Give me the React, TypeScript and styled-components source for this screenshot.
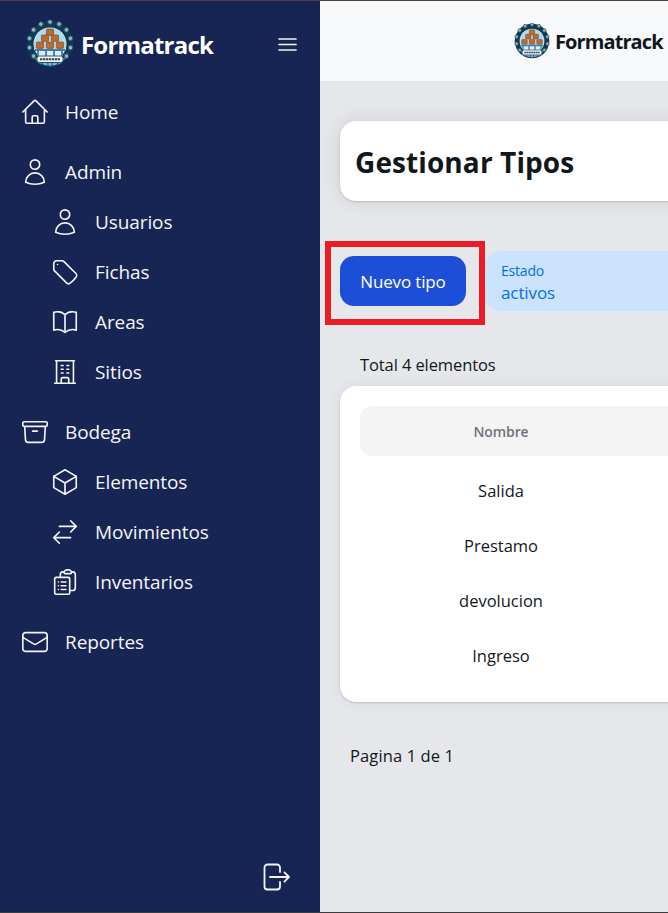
import React from "react";
import styled, { createGlobalStyle } from "styled-components";
import {
  HiOutlineHome,
  HiOutlineUser,
  HiOutlineTag,
  HiOutlineBookOpen,
  HiOutlineBuildingOffice,
  HiOutlineArchiveBox,
  HiOutlineCube,
  HiOutlineArrowsRightLeft,
  HiOutlineClipboardDocumentList,
  HiOutlineEnvelope,
  HiOutlineBars3,
} from "react-icons/hi2";

const Global = createGlobalStyle`
  html, body { margin: 0; padding: 0; height: 100%; overflow: hidden; }
  body { font-family: "Open Sans", "Noto Sans", "Liberation Sans", sans-serif; }
`;

const Frame = styled.div`
  width: 668px;
  height: 913px;
  display: flex;
  flex-direction: column;
  overflow: hidden;
`;
const EdgeLine = styled.div<{ $c: string }>`
  height: 1px;
  flex: none;
  background: ${(p) => p.$c};
`;
const Shell = styled.div`
  flex: 1;
  min-height: 0;
  display: flex;
`;
const Sidebar = styled.aside`
  width: 320px;
  flex: none;
  background: #172554;
  color: #f4f4f5;
  display: flex;
  flex-direction: column;
`;
const Brand = styled.div`
  height: 86px;
  flex: none;
  display: flex;
  align-items: center;
  padding: 0 20px 0 26px;
  box-sizing: border-box;
`;
const BrandName = styled.span`
  margin: 1px 0 0 7px;
  font-size: 24px;
  font-weight: 700;
  letter-spacing: -0.8px;
  color: #fff;
  flex: 1;
  line-height: 1;
`;
const Burger = styled.span`
  display: flex;
  color: #f4f4f5;
`;
const Nav = styled.nav`
  display: flex;
  flex-direction: column;
  gap: 10px;
`;
const Group = styled.div`
  display: flex;
  flex-direction: column;
`;
const Item = styled.a<{ $sub?: boolean }>`
  height: 50px;
  display: flex;
  align-items: center;
  gap: 15px;
  padding-left: ${(p) => (p.$sub ? 50 : 20)}px;
  font-size: 19px;
  letter-spacing: -0.1px;
  color: #f4f4f5;
  svg { width: 30px; height: 30px; flex: none; stroke-width: 1.3; }
`;
const Foot = styled.div`
  margin-top: auto;
  height: 70px;
  display: flex;
  align-items: center;
  justify-content: flex-end;
  padding: 0 28px 0 0;
`;
const Main = styled.main`
  flex: none;
  width: 700px;
  background: #e5e7eb;
  display: flex;
  flex-direction: column;
`;
const Topbar = styled.header`
  height: 80px;
  flex: none;
  background: #f8f9fb;
  display: flex;
  align-items: center;
  padding-left: 194px;
  gap: 5px;
`;
const TopName = styled.span`
  font-size: 20px;
  font-weight: 700;
  letter-spacing: -0.9px;
  color: #11181c;
`;
const Content = styled.div`
  padding: 40px 0 0 20px;
  display: flex;
  flex-direction: column;
`;
const TitleCard = styled.section`
  height: 80px;
  background: #fff;
  border-radius: 16px;
  box-shadow: 0 0 20px rgba(0, 0, 0, 0.1), 0 1px 2px rgba(0, 0, 0, 0.15);
  display: flex;
  align-items: center;
  padding: 2px 0 0 15px;
  box-sizing: border-box;
`;
const Title = styled.h1`
  margin: 0;
  font-size: 28px;
  font-weight: 700;
  letter-spacing: 0.1px;
  color: #11181c;
`;
const Tools = styled.div`
  margin-top: 50px;
  display: flex;
  align-items: center;
  gap: 20px;
`;
const ButtonWrap = styled.div`
  position: relative;
  flex: none;
`;
const Highlight = styled.span`
  position: absolute;
  inset: -15px -19px -19px -15px;
  border: 6px solid #ec1c24;
  box-sizing: border-box;
  pointer-events: none;
`;
const PrimaryButton = styled.button`
  width: 126px;
  height: 50px;
  border: 0;
  border-radius: 14px;
  background: #1d4ed8;
  color: #fff;
  font: inherit;
  font-size: 17px;
  letter-spacing: -0.15px;
  padding: 1px 0 0;
  display: block;
`;
const Select = styled.div`
  flex: 1;
  height: 60px;
  background: #cce3fd;
  border-radius: 14px;
  color: #006fee;
  padding: 9px 15px 0;
  box-sizing: border-box;
  display: flex;
  flex-direction: column;
`;
const SelectLabel = styled.span`
  font-size: 14px;
  line-height: 21px;
  letter-spacing: -0.2px;
`;
const SelectValue = styled.span`
  font-size: 17px;
  line-height: 23px;
  letter-spacing: -0.1px;
`;
const Total = styled.div`
  margin: 43px 0 10px 20px;
  font-size: 16.5px;
  line-height: 22px;
  letter-spacing: -0.1px;
  color: #11181c;
`;
const TableCard = styled.section`
  background: #fff;
  border-radius: 16px;
  box-shadow: 0 0 16px rgba(0, 0, 0, 0.06), 0 1px 2px rgba(0, 0, 0, 0.15);
  padding: 20px;
  height: 316px;
  box-sizing: border-box;
`;
const Table = styled.table`
  width: 100%;
  border-collapse: separate;
  border-spacing: 0;
  table-layout: fixed;
`;
const Th = styled.th`
  height: 50px;
  background: #f4f4f5;
  font-size: 14px;
  font-weight: 600;
  letter-spacing: -0.1px;
  color: #71717a;
  padding: 0;
  &:first-child { border-radius: 12px 0 0 12px; }
  &:last-child { border-radius: 0 12px 12px 0; }
`;
const SpacerRow = styled.tr`
  height: 7px;
`;
const Td = styled.td`
  height: 55px;
  padding: 0;
  text-align: center;
  font-size: 16.5px;
  letter-spacing: 0;
  color: #11181c;
`;
const Pager = styled.div`
  margin: 43px 0 0 10px;
  font-size: 16.5px;
  line-height: 22px;
  letter-spacing: 0.12px;
  color: #11181c;
`;

const Logo = ({ size }: { size: number }) => {
  const dots = Array.from({ length: 14 }, (_, i) => {
    const a = (i / 14) * Math.PI * 2 - Math.PI / 2;
    return { x: 24 + 21 * Math.cos(a), y: 23 + 21 * Math.sin(a) };
  });
  const barrels = [
    [24, 12],
    [19, 18],
    [29, 18],
    [14, 25],
    [24, 25],
    [34, 25],
  ];
  return (
    <svg width={size} height={size} viewBox="0 0 48 48" style={{ flex: "none" }}>
      <circle cx="24" cy="24" r="23" fill="#12394f" />
      <path d="M6 33a21 21 0 0 0 36 0l-2 4a19 19 0 0 1-32 0z" fill="#5fc3ea" />
      {dots.map((d, i) => (
        <circle key={i} cx={d.x} cy={d.y} r="2.3" fill="#8fb3c2" stroke="#23566c" strokeWidth="1" />
      ))}
      <circle cx="24" cy="24" r="16.5" fill="#d8eefa" />
      <path d="M8 24a16 16 0 0 1 32 0v6H8z" fill="#a9dcf4" />
      {barrels.map(([x, y], i) => (
        <rect key={i} x={x - 3.6} y={y - 3} width="7.2" height="6.4" rx="1" fill="#bd6a2a" stroke="#7a3f17" strokeWidth="0.6" />
      ))}
      <path d="M9 30h30M12 30v6M20 30v6M28 30v6M36 30v6" stroke="#3d7fa8" strokeWidth="1.8" />
      <rect x="11" y="36" width="26" height="6.5" rx="2" fill="#f1f5f7" stroke="#12394f" strokeWidth="0.8" />
      <path d="M14 39.2h20" stroke="#33464f" strokeWidth="2" strokeDasharray="2.4 .6" />
    </svg>
  );
};

const LogoutIcon = () => (
  <svg width="30" height="30" viewBox="0 0 30 30" fill="none" stroke="#f4f4f5" strokeWidth="1.8" strokeLinecap="round" strokeLinejoin="round">
    <path d="M18 10V5.5A3 3 0 0 0 15 2.5H5.5a3 3 0 0 0-3 3v19a3 3 0 0 0 3 3H15a3 3 0 0 0 3-3V20" />
    <path d="M8 15h19M22.5 10.5 27 15l-4.5 4.5" />
  </svg>
);

const groups = [
  { items: [{ icon: HiOutlineHome, label: "Home" }] },
  {
    items: [
      { icon: HiOutlineUser, label: "Admin" },
      { icon: HiOutlineUser, label: "Usuarios", sub: true },
      { icon: HiOutlineTag, label: "Fichas", sub: true },
      { icon: HiOutlineBookOpen, label: "Areas", sub: true },
      { icon: HiOutlineBuildingOffice, label: "Sitios", sub: true },
    ],
  },
  {
    items: [
      { icon: HiOutlineArchiveBox, label: "Bodega" },
      { icon: HiOutlineCube, label: "Elementos", sub: true },
      { icon: HiOutlineArrowsRightLeft, label: "Movimientos", sub: true },
      { icon: HiOutlineClipboardDocumentList, label: "Inventarios", sub: true },
    ],
  },
  { items: [{ icon: HiOutlineEnvelope, label: "Reportes" }] },
];

const rows = ["Salida", "Prestamo", "devolucion", "Ingreso"];

export default function App() {
  return (
    <Frame>
      <Global />
      <EdgeLine $c="#4a4036" />
      <Shell>
        <Sidebar>
          <Brand>
            <Logo size={48} />
            <BrandName>Formatrack</BrandName>
            <Burger>
              <HiOutlineBars3 size={25} />
            </Burger>
          </Brand>
          <Nav>
            {groups.map((g, i) => (
              <Group key={i}>
                {g.items.map((it: any) => (
                  <Item key={it.label} $sub={it.sub}>
                    <it.icon />
                    {it.label}
                  </Item>
                ))}
              </Group>
            ))}
          </Nav>
          <Foot>
            <LogoutIcon />
          </Foot>
        </Sidebar>
        <Main>
          <Topbar>
            <Logo size={36} />
            <TopName>Formatrack</TopName>
          </Topbar>
          <Content>
            <TitleCard>
              <Title>Gestionar Tipos</Title>
            </TitleCard>
            <Tools>
              <ButtonWrap>
                <PrimaryButton>Nuevo tipo</PrimaryButton>
                <Highlight />
              </ButtonWrap>
              <Select>
                <SelectLabel>Estado</SelectLabel>
                <SelectValue>activos</SelectValue>
              </Select>
            </Tools>
            <Total>Total 4 elementos</Total>
            <TableCard>
              <Table>
                <colgroup>
                  <col style={{ width: 282 }} />
                  <col />
                </colgroup>
                <thead>
                  <tr>
                    <Th>Nombre</Th>
                    <Th />
                  </tr>
                </thead>
                <tbody>
                  <SpacerRow />
                  {rows.map((r) => (
                    <tr key={r}>
                      <Td>{r}</Td>
                      <Td />
                    </tr>
                  ))}
                </tbody>
              </Table>
            </TableCard>
            <Pager>Pagina 1 de 1</Pager>
          </Content>
        </Main>
      </Shell>
      <EdgeLine $c="#3c3c3c" />
    </Frame>
  );
}
